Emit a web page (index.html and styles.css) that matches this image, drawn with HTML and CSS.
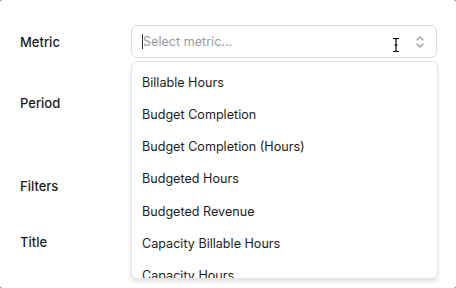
FILE: index.html
```html
<!DOCTYPE html>
<html lang="en">
<head>
    <meta charset="UTF-8">
    <title>Widget settings</title>
    <link rel="stylesheet" href="styles.css">
</head>
<body>
    <div class="dialog">
        <div class="form">
            <!-- Metric select, opened -->
            <div class="row row-metric">
                <label class="label">Metric</label>
                <div class="field">
                    <div class="select">
                        <span class="caret"></span>
                        <span class="placeholder">Select metric...</span>
                        <svg class="ibeam" width="10" height="16" viewBox="0 0 10 16">
                            <path d="M2 1.5h2.2L5 2.3l.8-.8H8M5 2.3v11.4M2 14.5h2.2l.8-.8.8.8H8M3.5 8h3" fill="none" stroke="#000" stroke-width="1.2"/>
                        </svg>
                        <svg class="chevrons" width="10" height="16" viewBox="0 0 10 16">
                            <path d="M2 6l3-3 3 3M2 10l3 3 3-3" fill="none" stroke="#9a9a9a" stroke-width="1.2" stroke-linecap="round" stroke-linejoin="round"/>
                        </svg>
                    </div>
                    <div class="menu">
                        <ul class="options">
                            <li>Billable Hours</li>
                            <li>Budget Completion</li>
                            <li>Budget Completion (Hours)</li>
                            <li>Budgeted Hours</li>
                            <li>Budgeted Revenue</li>
                            <li>Capacity Billable Hours</li>
                            <li>Capacity Hours</li>
                        </ul>
                    </div>
                </div>
            </div>

            <div class="row row-period">
                <label class="label">Period</label>
                <div class="field"><div class="select"></div></div>
            </div>

            <div class="row row-filters">
                <label class="label">Filters</label>
                <div class="field"><div class="select"></div></div>
            </div>

            <div class="row row-title">
                <label class="label">Title</label>
                <div class="field"><div class="select"></div></div>
            </div>
        </div>
    </div>
</body>
</html>
```

FILE: styles.css
```css
body {
    margin: 0;
    background-color: #9a9a9a;
    font-family: Inter, 'Noto Sans', sans-serif;
    color: #1c1c1c;
}

.dialog {
    width: 456px;
    height: 288px;
    background-color: white;
    border-radius: 3px;
    overflow: hidden;
}

.form {
    padding: 25px 19px 0 20px;
}

.row {
    display: flex;
    align-items: center;
    height: 33px;
}

.row-period {
    margin-top: 28px;
}

.row-filters {
    margin-top: 50px;
}

.row-title {
    margin-top: 23px;
}

.label {
    width: 111px;
    flex-shrink: 0;
    font-size: 13px;
    font-weight: 500;
}

.field {
    flex: 1;
    position: relative;
}

.select {
    height: 33px;
    box-sizing: border-box;
    border: 1px solid #dcdcdc;
    border-radius: 6px;
    display: flex;
    align-items: center;
    padding: 0 10px;
}

.caret {
    width: 1px;
    height: 15px;
    background-color: #333;
}

.placeholder {
    font-size: 12.6px;
    color: #9b9b9b;
    flex: 1;
}

.ibeam {
    margin-right: 14px;
    margin-top: 6px;
}

.chevrons {
    margin-right: 1px;
}

/* dropdown list laid over the other rows */
.menu {
    position: absolute;
    top: 36px;
    left: 0;
    right: -1px;
    height: 216px;
    background-color: white;
    border: 1px solid #e6e6e6;
    border-radius: 6px;
    box-shadow: 0 3px 4px rgba(0, 0, 0, 0.12);
    overflow: hidden;
    z-index: 10;
}

.options {
    list-style: none;
    margin: 0;
    padding: 4.5px 0 0;
}

.options li {
    height: 32.3px;
    line-height: 32.3px;
    padding-left: 10px;
    font-size: 12.6px;
}
```
